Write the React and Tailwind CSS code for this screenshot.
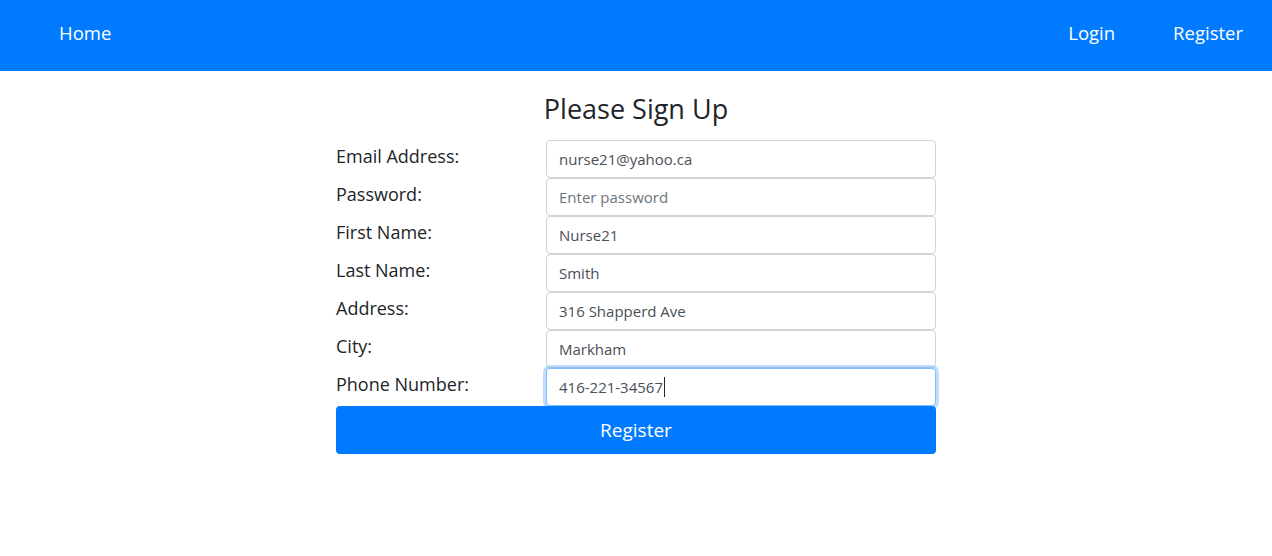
import React from 'react';

const fields = [
  { label: 'Email Address:', value: 'nurse21@yahoo.ca' },
  { label: 'Password:', placeholder: 'Enter password' },
  { label: 'First Name:', value: 'Nurse21' },
  { label: 'Last Name:', value: 'Smith' },
  { label: 'Address:', value: '316 Shapperd Ave' },
  { label: 'City:', value: 'Markham' },
  { label: 'Phone Number:', value: '416-221-34567', focused: true },
];

export default function App() {
  return (
    <div className="min-h-screen bg-white font-['Open_Sans',sans-serif] text-[#212529]">
      {/* navbar */}
      <nav className="h-[71px] bg-[#007bff] flex items-center justify-between pl-[59px] pr-[29px] text-white text-[18.5px]">
        <a className="pb-[6px]">Home</a>
        <div className="flex gap-[58px] pb-[6px]">
          <a>Login</a>
          <a>Register</a>
        </div>
      </nav>

      <div className="w-[600px] mx-auto pt-[20px]">
        <h3 className="text-center text-[27px] leading-[36px] mb-[13px]">Please Sign Up</h3>

        <form>
          {fields.map((f) => (
            <div key={f.label} className="flex h-[38px]">
              <label className="w-[210px] text-[18px] leading-[20px] pt-[6px]">{f.label}</label>
              <div
                className={
                  'flex-1 flex items-center px-[12px] rounded-[4px] border bg-white text-[15px] ' +
                  (f.focused
                    ? 'border-[#80bdff] shadow-[0_0_0_3px_rgba(0,123,255,0.25)]'
                    : 'border-[#ced4da]')
                }
              >
                {f.value ? (
                  <span className="text-[#495057]">{f.value}</span>
                ) : (
                  <span className="text-[#6c757d] pt-px">{f.placeholder}</span>
                )}
                {f.focused && <span className="w-px h-[20px] bg-[#212529] ml-px" />}
              </div>
            </div>
          ))}

          <button
            type="button"
            className="w-full h-[48px] rounded-[4px] bg-[#007bff] text-white text-[19px]"
          >
            Register
          </button>
        </form>
      </div>
    </div>
  );
}
